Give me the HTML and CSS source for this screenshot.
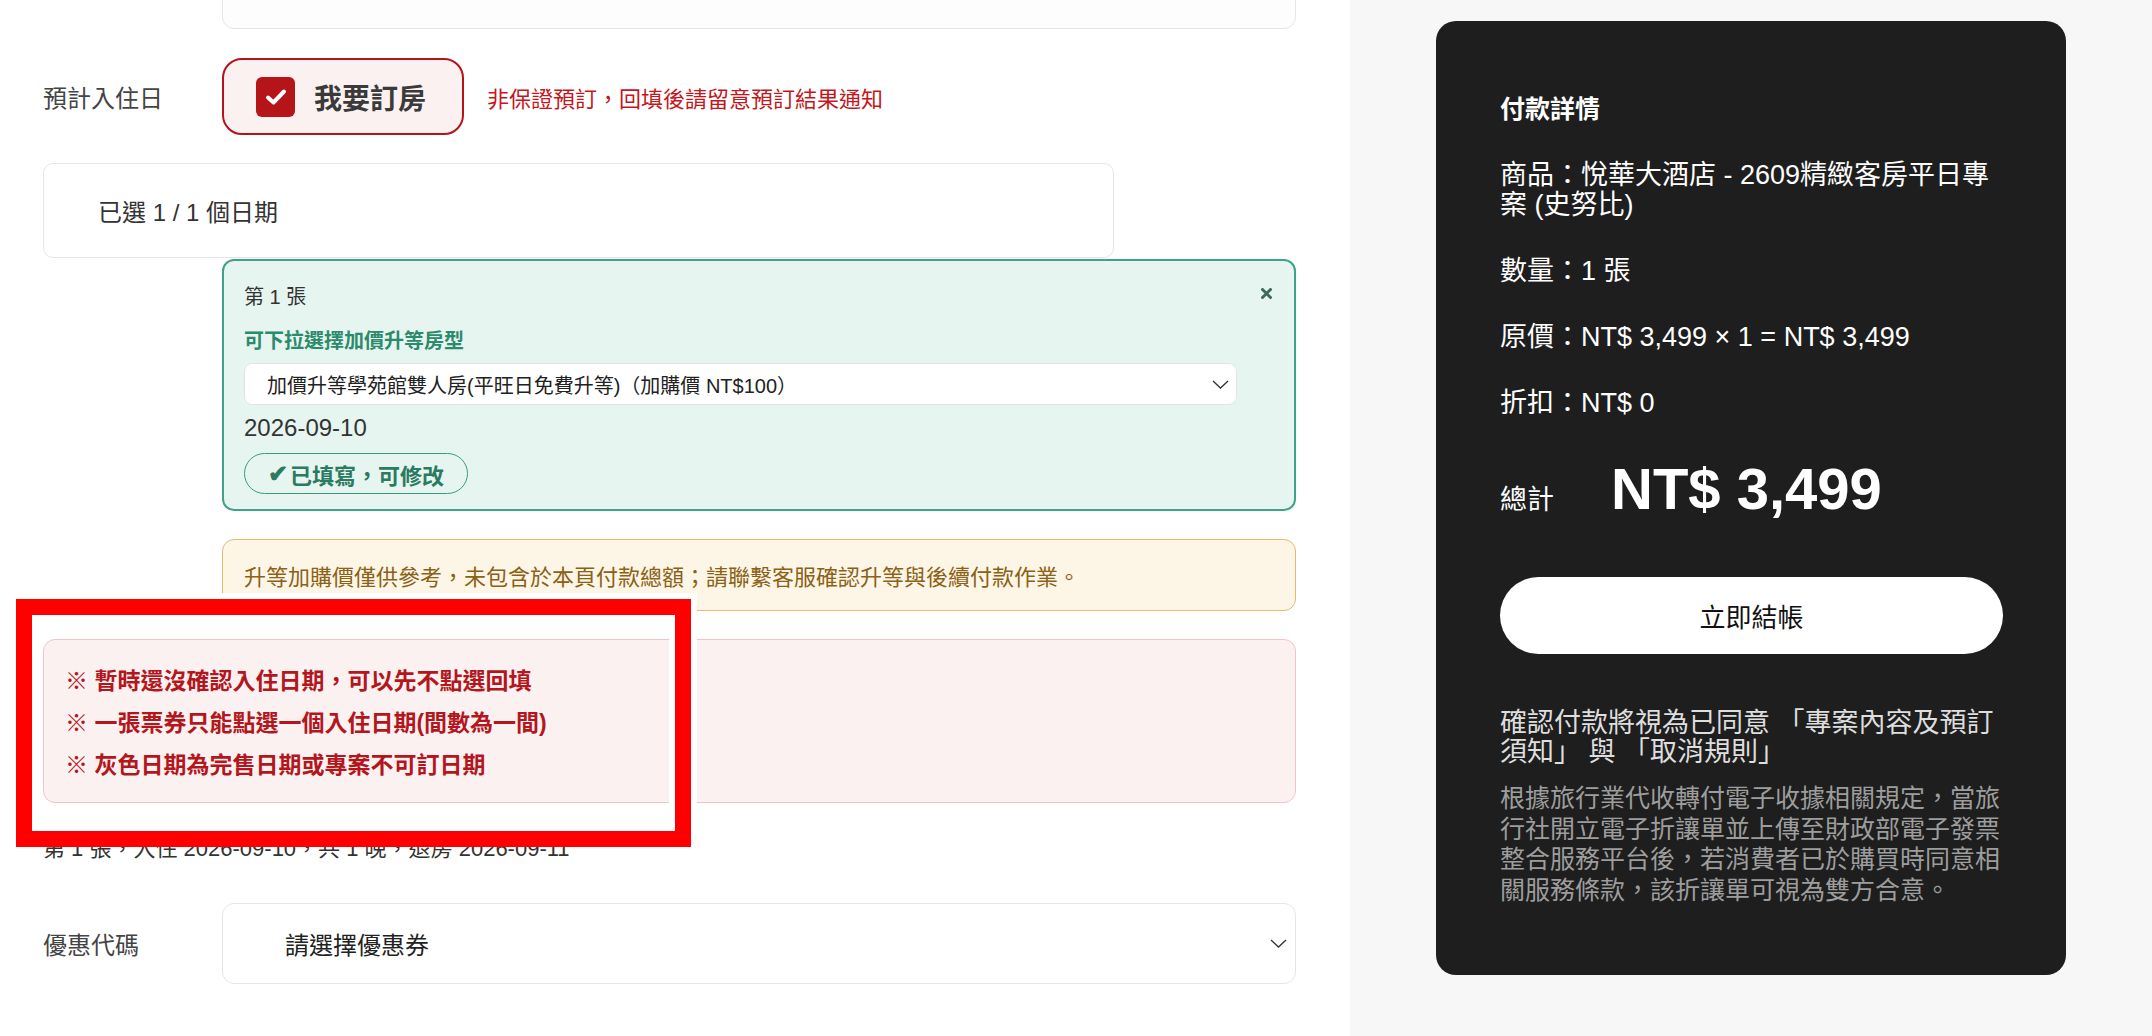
FILE: index.html
```html
<!DOCTYPE html>
<html lang="zh-Hant">
<head>
    <meta charset="UTF-8">
    <meta name="viewport" content="width=device-width, initial-scale=1.0">
    <title>結帳</title>
    <link rel="stylesheet" href="styles.css">
</head>
<body>
    <div class="page">
        <main class="form-col">
            <div class="field-row field-top">
                <div class="field-label">訂購備註</div>
                <div class="field-box"></div>
            </div>

            <div class="field-row row-checkin">
                <div class="field-label">預計入住日</div>
                <div class="checkin-ctrl">
                    <label class="book-toggle">
                        <span class="tick">
                            <svg width="22" height="18" viewBox="0 0 22 18"><path d="M3 9.5 L8.5 14.5 L19 3.5" fill="none" stroke="#fff" stroke-width="4" stroke-linecap="round" stroke-linejoin="round"/></svg>
                        </span>
                        <span>我要訂房</span>
                    </label>
                    <span class="book-note">非保證預訂，回填後請留意預訂結果通知</span>
                </div>
            </div>

            <div class="picked">已選 1 / 1 個日期</div>

            <!-- 每張票券的入住資料 -->
            <div class="ticket-card">
                <div class="ticket-head">第 1 張</div>
                <span class="ticket-close">
                    <svg width="11" height="11" viewBox="0 0 11 11"><path d="M1.5 1.5 L9.5 9.5 M9.5 1.5 L1.5 9.5" stroke="#3f6b5c" stroke-width="3" stroke-linecap="round"/></svg>
                </span>
                <div class="upgrade-label">可下拉選擇加價升等房型</div>
                <div class="select upgrade-select">
                    <span>加價升等學苑館雙人房(平旺日免費升等)（加購價 NT$100）</span>
                    <svg width="17" height="9" viewBox="0 0 17 9"><polyline points="1,1 8.5,8 16,1" fill="none" stroke="#333" stroke-width="1.3"/></svg>
                </div>
                <div class="ticket-date">2026-09-10</div>
                <span class="filled-pill"><span class="pill-check">✔</span>已填寫，可修改</span>
            </div>

            <div class="notice-warn">升等加購價僅供參考，未包含於本頁付款總額；請聯繫客服確認升等與後續付款作業。</div>

            <div class="notice-alert">
                <div>※ 暫時還沒確認入住日期，可以先不點選回填</div>
                <div>※ 一張票券只能點選一個入住日期(間數為一間)</div>
                <div>※ 灰色日期為完售日期或專案不可訂日期</div>
            </div>

            <div class="stay-summary">第 1 張，入住 2026-09-10，共 1 晚，退房 2026-09-11</div>

            <div class="field-row row-coupon">
                <div class="field-label">優惠代碼</div>
                <div class="select coupon-select">
                    <span>請選擇優惠券</span>
                    <svg width="17" height="9" viewBox="0 0 17 9"><polyline points="1,1 8.5,8 16,1" fill="none" stroke="#333" stroke-width="1.3"/></svg>
                </div>
            </div>

            <div class="mark-frame"></div>
        </main>

        <aside class="summary-col">
            <div class="pay-card">
                <div class="pay-title">付款詳情</div>
                <div class="pay-item">商品：悅華大酒店 - 2609精緻客房平日專案 (史努比)</div>
                <div class="pay-item">數量：1 張</div>
                <div class="pay-item">原價：NT$ 3,499 × 1 = NT$ 3,499</div>
                <div class="pay-item">折扣：NT$ 0</div>
                <div class="pay-total">
                    <span class="total-label">總計</span>
                    <span class="total-amount">NT$ 3,499</span>
                </div>
                <button class="checkout-btn">立即結帳</button>
                <p class="agree-text">確認付款將視為已同意 「專案內容及預訂須知」 與 「取消規則」</p>
                <p class="legal-text">根據旅行業代收轉付電子收據相關規定，當旅行社開立電子折讓單並上傳至財政部電子發票整合服務平台後，若消費者已於購買時同意相關服務條款，該折讓單可視為雙方合意。</p>
            </div>
        </aside>
    </div>
</body>
</html>
```

FILE: styles.css
```css
:root {
    --brand-red: #b3141b;
    --mint: #3fa38a;
    --mint-text: #2c8a6d;
    --line: #e6e6e6;
    --text: #333;
}

body {
    margin: 0;
    height: 1036px;
    overflow: hidden;
    font-family: 'Liberation Sans', 'Noto Sans CJK TC', sans-serif;
    color: var(--text);
    background: #fff;
}

.page {
    display: flex;
    height: 1036px;
}

/* 左側表單 */
.form-col {
    position: relative;
    width: 1350px;
    flex-shrink: 0;
    box-sizing: border-box;
    padding: 0 54px 0 43px;
}

.field-row {
    display: grid;
    grid-template-columns: 179px 1fr;
    align-items: center;
}

.field-label {
    font-size: 24px;
    color: #444;
}

.field-top {
    margin-top: -57px;
}

.field-box {
    height: 86px;
    box-sizing: border-box;
    border: 1px solid var(--line);
    border-radius: 12px;
    background: #fdfdfd;
}

.row-checkin {
    margin-top: 29px;
}

.checkin-ctrl {
    display: flex;
    align-items: center;
    gap: 23px;
}

.book-toggle {
    height: 77px;
    box-sizing: border-box;
    display: flex;
    align-items: center;
    gap: 19px;
    padding: 0 36px 0 32px;
    border: 2px solid var(--brand-red);
    border-radius: 20px;
    background: #fcf1f1;
    font-size: 28px;
    font-weight: 700;
    color: #3a3a3a;
}

.tick {
    width: 39px;
    height: 40px;
    border-radius: 6px;
    background: #b51418;
    display: flex;
    justify-content: center;
    align-items: center;
}

.book-note {
    font-size: 22px;
    color: #c4161c;
}

.picked {
    margin-top: 28px;
    width: 1071px;
    height: 95px;
    box-sizing: border-box;
    display: flex;
    align-items: center;
    padding-left: 54px;
    border: 1px solid var(--line);
    border-radius: 10px;
    font-size: 24px;
}

.ticket-card {
    position: relative;
    margin: 1px 0 0 179px;
    padding: 22px 57px 15px 20px;
    border: 2px solid var(--mint);
    border-radius: 12px;
    background: #e7f5f0;
}

.ticket-head {
    font-size: 20px;
    line-height: 28px;
}

.ticket-close {
    position: absolute;
    top: 27px;
    right: 22px;
    line-height: 0;
}

.upgrade-label {
    margin-top: 16px;
    font-size: 20px;
    line-height: 28px;
    font-weight: 700;
    color: var(--mint-text);
}

.select {
    display: flex;
    justify-content: space-between;
    align-items: center;
    box-sizing: border-box;
    background: #fff;
    color: #222;
}

.upgrade-select {
    margin-top: 8px;
    height: 42px;
    padding: 0 7px 0 22px;
    border: 1px solid #dde8e3;
    border-radius: 8px;
    font-size: 20px;
}

.ticket-date {
    margin-top: 7px;
    font-size: 24px;
    line-height: 32px;
}

.filled-pill {
    display: inline-flex;
    align-items: center;
    margin-top: 9px;
    height: 41px;
    box-sizing: border-box;
    padding: 0 23px;
    border: 1px solid #3a9a80;
    border-radius: 21px;
    font-size: 22px;
    font-weight: 700;
    color: #2b7a62;
}

.pill-check {
    font-size: 24px;
    margin-right: 2px;
}

.notice-warn {
    margin: 28px 0 0 179px;
    height: 72px;
    box-sizing: border-box;
    display: flex;
    align-items: center;
    padding-left: 21px;
    border: 1px solid #e9b96e;
    border-radius: 12px;
    background: #fdf6e6;
    font-size: 22px;
    color: #8b6116;
}

.notice-alert {
    margin-top: 28px;
    padding: 20px 20px 16px 21px;
    border: 1px solid #f0c5c5;
    border-radius: 12px;
    background: #fcf1f1;
    font-size: 23px;
    line-height: 42px;
    font-weight: 700;
    color: #b3171d;
}

.stay-summary {
    margin-top: 31px;
    font-size: 22px;
    line-height: 30px;
}

.row-coupon {
    margin-top: 39px;
}

.coupon-select {
    height: 81px;
    padding: 0 8px 0 62px;
    border: 1px solid var(--line);
    border-radius: 12px;
    font-size: 24px;
}

/* 標註框 */
.mark-frame {
    position: absolute;
    left: 16px;
    top: 599px;
    width: 675px;
    height: 248px;
    box-sizing: border-box;
    border: 16px solid #ff0000;
    box-shadow: 6px -6px 0 #fff, inset -6px 0 0 #fff;
}

/* 右側付款資訊 */
.summary-col {
    flex: 1;
    background: #f7f7f7;
    display: flex;
    justify-content: center;
    align-items: flex-start;
    padding-top: 21px;
}

.pay-card {
    width: 630px;
    box-sizing: border-box;
    padding: 73px 63px 70px 64px;
    border-radius: 20px;
    background: #1e1e1e;
    color: #fff;
}

.pay-title {
    font-size: 25px;
    line-height: 30px;
    font-weight: 700;
}

.pay-item {
    margin-top: 36px;
    font-size: 27px;
    line-height: 30px;
}

.pay-total {
    display: flex;
    align-items: baseline;
    gap: 57px;
    margin-top: 42px;
}

.total-label {
    font-size: 27px;
    line-height: 30px;
}

.total-amount {
    font-size: 58px;
    line-height: 58px;
    font-weight: 700;
}

.checkout-btn {
    display: block;
    width: 100%;
    height: 77px;
    margin-top: 59px;
    border: none;
    border-radius: 39px;
    background: #fff;
    color: #111;
    font-family: inherit;
    font-size: 26px;
}

.agree-text {
    margin: 55px 0 0;
    font-size: 27px;
    line-height: 29px;
    color: #dedede;
}

.legal-text {
    margin: 16px 0 0;
    font-size: 25px;
    line-height: 30.5px;
    color: #9d9d9d;
}
```
